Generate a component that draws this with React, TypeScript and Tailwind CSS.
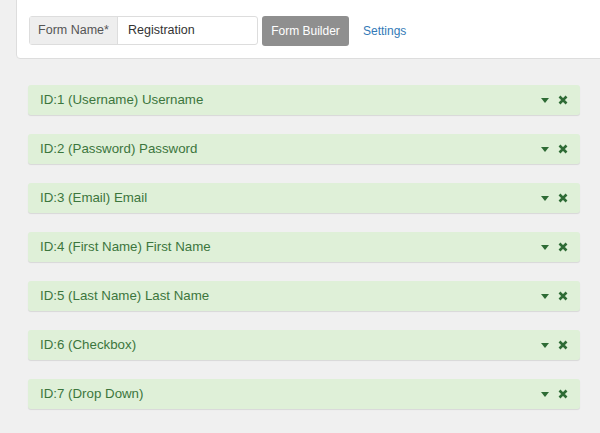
const fields = [
  "ID:1 (Username) Username",
  "ID:2 (Password) Password",
  "ID:3 (Email) Email",
  "ID:4 (First Name) First Name",
  "ID:5 (Last Name) Last Name",
  "ID:6 (Checkbox)",
  "ID:7 (Drop Down)",
];

export default function App() {
  return (
    <div
      className="h-[433px] w-[600px] overflow-hidden bg-[#f0f0f0] text-[13px]"
      style={{ fontFamily: '"Helvetica Neue", "Liberation Sans", Arial, sans-serif' }}
    >
      <div className="-mt-[4px] ml-[16px] -mr-[8px] flex h-[63px] items-center rounded-[4px] border border-[#ddd] bg-white pt-[6px] pl-[12px]">
        <div className="flex h-[29px] w-[229px] rounded-[3px] border border-[#ddd] text-[12.5px]">
          <div className="flex w-[88px] items-center justify-center border-r border-[#ddd] bg-[#eee] text-[#555]">Form Name*</div>
          <div className="flex flex-1 items-center px-[10px] text-[#333]">Registration</div>
        </div>
        <div className="ml-[4px] flex h-[30px] w-[87px] items-center justify-center rounded-[3px] bg-[#8f8f8f] text-[12px] text-white">
          Form Builder
        </div>
        <div className="ml-[14px] text-[12px] text-[#337ab7]">Settings</div>
      </div>
      <div className="mt-[26px] flex flex-col gap-[19px] pl-[28px] pr-[20px]">
        {fields.map((f) => (
          <div
            key={f}
            className="flex h-[30px] items-center rounded-[3px] bg-[#dff0d8] pl-[12px] pr-[12px] text-[13.3px] text-[#3c763d] shadow-[0_1px_1px_rgba(0,0,0,0.1)]"
          >
            <span className="flex-1">{f}</span>
            <svg width="8" height="5" viewBox="0 0 8 5" className="mr-[9px]">
              <path d="M0 0h8L4 5z" fill="#2e6b35" />
            </svg>
            <svg width="10" height="10" viewBox="0 0 10 10">
              <path d="M1.5 1.5l7 7M8.5 1.5l-7 7" stroke="#2e6b35" strokeWidth="2.6" />
            </svg>
          </div>
        ))}
      </div>
    </div>
  );
}
